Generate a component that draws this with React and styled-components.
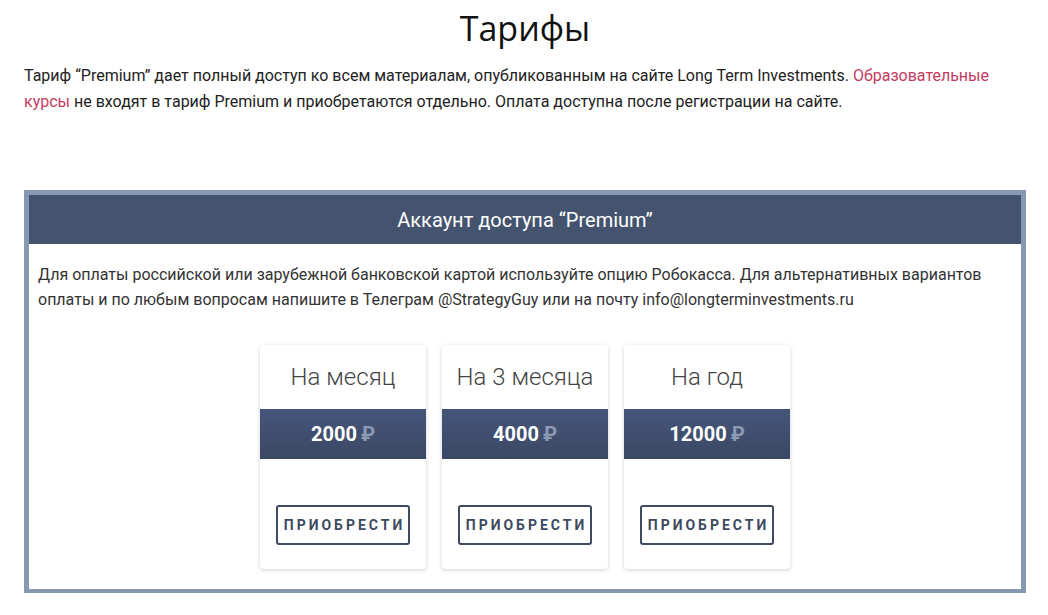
import React from 'react';
import styled, { createGlobalStyle } from 'styled-components';

const GlobalStyle = createGlobalStyle`
  body {
    margin: 0;
    background: #fff;
    font-family: Roboto, "Noto Sans", sans-serif;
  }
`;

const Page = styled.div`
  width: 1048px;
  padding: 0 22px 0 24px;
  box-sizing: border-box;
`;

const Title = styled.h1`
  margin: 0;
  padding-top: 7px;
  font-family: "Open Sans", "Noto Sans", sans-serif;
  font-weight: 400;
  font-size: 34px;
  line-height: 42px;
  color: #111;
  text-align: center;
`;

const Intro = styled.p`
  margin: 14px 0 0;
  font-size: 16px;
  line-height: 26px;
  color: #222;
  a {
    color: #c63a5e;
    text-decoration: none;
  }
`;

const Box = styled.section`
  margin-top: 75px;
  border: 5px solid #8798b2;
  border-bottom-width: 4px;
  background: #fff;
`;

const BoxHeader = styled.div`
  height: 49px;
  background: #44546f;
  color: #fff;
  font-size: 20px;
  display: flex;
  align-items: center;
  justify-content: center;
`;

const BoxText = styled.p`
  margin: 0;
  padding: 18px 10px 0 9px;
  font-size: 16px;
  line-height: 25px;
  color: #333;
`;

const Plans = styled.div`
  display: flex;
  justify-content: center;
  gap: 16px;
  padding: 33px 0 20px;
`;

const Card = styled.div`
  width: 166px;
  height: 224px;
  background: #fff;
  border-radius: 4px;
  box-shadow: 0 1px 4px rgba(0, 0, 0, 0.18);
  display: flex;
  flex-direction: column;
  align-items: center;
`;

const PlanName = styled.div`
  height: 64px;
  display: flex;
  align-items: center;
  font-size: 24px;
  font-weight: 300;
  color: #444;
`;

const PriceBand = styled.div`
  align-self: stretch;
  height: 50px;
  background: linear-gradient(#46567a, #3a4863);
  display: flex;
  align-items: center;
  justify-content: center;
  color: #fff;
  font-size: 20px;
  font-weight: 700;
`;

const Ruble = styled.span`
  margin-left: 4px;
  color: #8c9ab3;
`;

const BuyButton = styled.button`
  margin-top: 46px;
  width: 134px;
  height: 40px;
  background: #fff;
  border: 2px solid #3d4a5f;
  border-radius: 3px;
  color: #3d4a5f;
  font-family: Roboto, sans-serif;
  font-size: 14px;
  font-weight: 700;
  letter-spacing: 3px;
  padding: 0 0 0 3px;
`;

const plans = [
  { name: 'На месяц', price: '2000' },
  { name: 'На 3 месяца', price: '4000' },
  { name: 'На год', price: '12000' },
];

export default function App() {
  return (
    <Page>
      <GlobalStyle />
      <Title>Тарифы</Title>
      <Intro>
        Тариф “Premium” дает полный доступ ко всем материалам, опубликованным на сайте Long Term Investments.{' '}
        <a href="#courses">Образовательные курсы</a> не входят в тариф Premium и приобретаются отдельно. Оплата доступна после регистрации на сайте.
      </Intro>
      <Box>
        <BoxHeader>Аккаунт доступа “Premium”</BoxHeader>
        <BoxText>
          Для оплаты российской или зарубежной банковской картой используйте опцию Робокасса. Для альтернативных вариантов оплаты и по любым вопросам напишите в Телеграм @StrategyGuy или на почту info@longterminvestments.ru
        </BoxText>
        <Plans>
          {plans.map((p) => (
            <Card key={p.name}>
              <PlanName>{p.name}</PlanName>
              <PriceBand>
                {p.price}
                <Ruble>₽</Ruble>
              </PriceBand>
              <BuyButton>ПРИОБРЕСТИ</BuyButton>
            </Card>
          ))}
        </Plans>
      </Box>
    </Page>
  );
}
